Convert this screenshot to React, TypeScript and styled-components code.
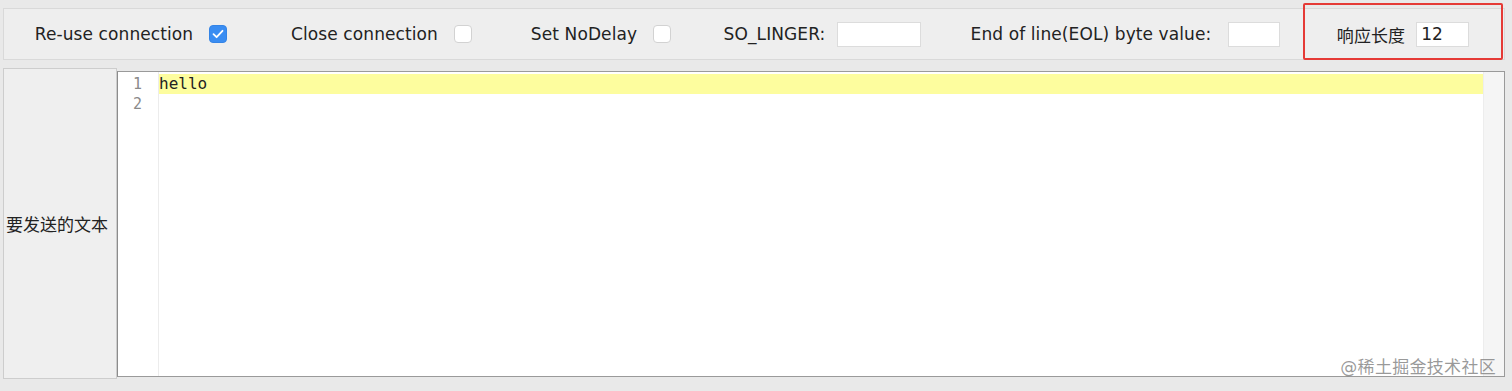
import styled, { createGlobalStyle } from "styled-components"

const GlobalStyle = createGlobalStyle`
  html, body {
    margin: 0;
    padding: 0;
    background: #e9e9e9;
    font-family: "DejaVu Sans", "Noto Sans CJK SC", sans-serif;
    color: #222;
  }
`

const Page = styled.div`
  position: relative;
  width: 1512px;
  height: 391px;
  padding: 8px 0 0 3px;
  box-sizing: border-box;
  overflow: hidden;
`

const Toolbar = styled.div`
  display: flex;
  width: 1502px;
  height: 52px;
  box-sizing: border-box;
  border: 1px solid #d9d9d9;
  background: #eeeeee;
`

const Cell = styled.div<{ $w: number; $gap: number; $marked?: boolean }>`
  position: relative;
  display: flex;
  align-items: center;
  justify-content: center;
  width: ${(p) => p.$w}px;
  gap: ${(p) => p.$gap}px;
  flex: none;
  font-size: 17px;
  white-space: nowrap;

  ${(p) =>
    p.$marked &&
    `
    &::after {
      content: "";
      position: absolute;
      left: 0;
      right: 0;
      top: -6px;
      bottom: -1px;
      border: 2px solid #e53a36;
      border-radius: 2px;
    }
  `}
`

const Label = styled.span`
  font-size: 17px;
  letter-spacing: 0.1px;
`

const Check = styled.span<{ $on?: boolean }>`
  display: inline-flex;
  align-items: center;
  justify-content: center;
  width: 18px;
  height: 18px;
  box-sizing: border-box;
  border-radius: 4px;
  background: ${(p) => (p.$on ? "#3a8df2" : "#ffffff")};
  border: 1px solid ${(p) => (p.$on ? "#3484e6" : "#d2d2d2")};
`

const Field = styled.div<{ $w: number }>`
  width: ${(p) => p.$w}px;
  height: 25px;
  box-sizing: border-box;
  background: #ffffff;
  border: 1px solid #dcdcdc;
  font-size: 17px;
  line-height: 23px;
  padding-left: 4px;
`

const Body = styled.div`
  display: flex;
  align-items: flex-start;
  margin-top: 8px;
`

const SideLabel = styled.div`
  display: flex;
  align-items: center;
  width: 114px;
  height: 311px;
  box-sizing: border-box;
  padding-left: 2px;
  background: #efefef;
  border: 1px solid #cdcdcd;
  font-size: 17px;
  white-space: nowrap;
`

const Editor = styled.div`
  display: flex;
  width: 1388px;
  height: 306px;
  margin-top: 3px;
  box-sizing: border-box;
  background: #ffffff;
  border: 1px solid #9a9a9a;
  border-left-color: #8c8c8c;
`

const Gutter = styled.div`
  width: 41px;
  flex: none;
  padding-top: 2px;
  box-sizing: border-box;
  border-right: 1px solid #ececec;
  font-family: "DejaVu Sans Mono", monospace;
  font-size: 15px;
  color: #8a8a8a;
`

const Code = styled.div`
  flex: 1;
  padding-top: 2px;
  font-family: "DejaVu Sans Mono", monospace;
  font-size: 16px;
`

const LineNo = styled.div`
  height: 20px;
  line-height: 20px;
  text-align: right;
  padding-right: 16px;
`

const Line = styled.div<{ $current?: boolean }>`
  height: 20px;
  line-height: 20px;
  background: ${(p) => (p.$current ? "#fdfd9e" : "transparent")};
  color: #222;
`

const ScrollStrip = styled.div`
  width: 20px;
  flex: none;
  background: #f5f5f5;
  border-left: 1px solid #ededed;
`

const Watermark = styled.div`
  position: absolute;
  right: 16px;
  bottom: 13px;
  font-size: 17px;
  color: rgba(120, 120, 120, 0.75);
  letter-spacing: 0.3px;
`

function Tick() {
  return (
    <svg width="12" height="10" viewBox="0 0 12 10">
      <path d="M1.5 5.2 L4.6 8.2 L10.5 1.8" fill="none" stroke="#fff" strokeWidth="1.8" strokeLinecap="round" strokeLinejoin="round" />
    </svg>
  )
}

export default function App() {
  return (
    <>
      <GlobalStyle />
      <Page>
        <Toolbar>
          <Cell $w={254} $gap={16}>
            <Label>Re-use connection</Label>
            <Check $on>
              <Tick />
            </Check>
          </Cell>
          <Cell $w={247} $gap={16}>
            <Label>Close connection</Label>
            <Check />
          </Cell>
          <Cell $w={192} $gap={16}>
            <Label>Set NoDelay</Label>
            <Check />
          </Cell>
          <Cell $w={251} $gap={12}>
            <Label>SO_LINGER:</Label>
            <Field $w={84} />
          </Cell>
          <Cell $w={355} $gap={17}>
            <Label>End of line(EOL) byte value:</Label>
            <Field $w={52} />
          </Cell>
          <Cell $w={200} $gap={11} $marked>
            <Label>响应长度</Label>
            <Field $w={53}>12</Field>
          </Cell>
        </Toolbar>
        <Body>
          <SideLabel>要发送的文本</SideLabel>
          <Editor>
            <Gutter>
              <LineNo>1</LineNo>
              <LineNo>2</LineNo>
            </Gutter>
            <Code>
              <Line $current>hello</Line>
              <Line />
            </Code>
            <ScrollStrip />
          </Editor>
        </Body>
        <Watermark>@稀土掘金技术社区</Watermark>
      </Page>
    </>
  )
}
